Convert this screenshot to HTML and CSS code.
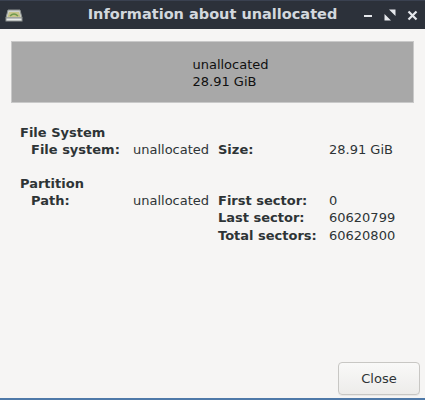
FILE: index.html
```html
<!DOCTYPE html>
<html>
<head>
<meta charset="utf-8">
<link rel="stylesheet" href="styles.css">
</head>
<body>
<div class="window">
  <div class="titlebar">
    <svg class="app-icon" width="18" height="16" viewBox="0 0 18 16">
      <path d="M3 3 L15 3 L17 11 L1 11 Z" fill="#cfd3d0" stroke="#8d9290" stroke-width="1"/>
      <path d="M4 5 L14 5 L15.5 10 L2.5 10 Z" fill="#c7c48a"/>
      <path d="M5 9 Q9 5 13 9" stroke="#6f9a4e" stroke-width="1.5" fill="none"/>
      <rect x="1" y="11" width="16" height="3" fill="#e8eae8" stroke="#8d9290" stroke-width="1"/>
    </svg>
    <div class="title">Information about unallocated</div>
    <div class="controls">
      <svg width="10" height="10" viewBox="0 0 10 10"><rect x="1" y="5" width="8" height="2" fill="#e6e8ec"/></svg>
      <svg width="12" height="12" viewBox="0 0 12 12"><path d="M5 0.5 L11.5 0.5 L11.5 7 Z M0.5 5 L7 11.5 L0.5 11.5 Z" fill="#e6e8ec"/></svg>
      <svg width="11" height="11" viewBox="0 0 11 11"><path d="M1.5 1.5 L9.5 9.5 M9.5 1.5 L1.5 9.5" stroke="#e6e8ec" stroke-width="2.2"/></svg>
    </div>
  </div>
  <div class="content">
    <div class="banner">
      <div class="banner-text">unallocated<br>28.91 GiB</div>
    </div>
    <div class="section">
      <div class="heading">File System</div>
      <div class="grid">
        <div class="label">File system:</div><div class="val">unallocated</div><div class="label">Size:</div><div class="val">28.91 GiB</div>
      </div>
    </div>
    <div class="section">
      <div class="heading">Partition</div>
      <div class="grid">
        <div class="label">Path:</div><div class="val">unallocated</div><div class="label">First sector:</div><div class="val">0</div>
        <div></div><div></div><div class="label">Last sector:</div><div class="val">60620799</div>
        <div></div><div></div><div class="label">Total sectors:</div><div class="val">60620800</div>
      </div>
    </div>
    <div class="spacer"></div>
    <div class="buttons"><button class="btn">Close</button></div>
  </div>
</div>
</body>
</html>
```
FILE: styles.css
```css
html, body { margin: 0; padding: 0; }
body {
  width: 425px; height: 400px; overflow: hidden;
  font-family: "DejaVu Sans", sans-serif;
  font-size: 13px; color: #2e3436;
  background: #f6f5f4;
}
.window {
  width: 425px; height: 400px;
  display: flex; flex-direction: column;
  box-sizing: border-box;
  border-bottom: 2px solid #4f79a8;
}
.titlebar {
  height: 29px; flex: none;
  background: #2c313a;
  display: flex; align-items: center;
  position: relative;
  border-top: 1px solid #3a4150;
  box-sizing: border-box;
}
.app-icon { margin-left: 5px; margin-top: -1px; }
.title {
  position: absolute; left: 0; right: 0; top: 5px;
  text-align: center;
  font-weight: bold; font-size: 14.5px;
  color: #d3d8de;
}
.controls {
  margin-left: auto; margin-right: 7px;
  display: flex; align-items: center; gap: 11px;
}
.content {
  flex: 1;
  display: flex; flex-direction: column;
  padding: 12px 11px 3px 11px;
}
.banner {
  height: 62px; background: #a8a8a8;
  border: 1px solid #c9c9c9;
  box-sizing: border-box;
  display: flex; align-items: center; justify-content: center;
}
.banner-text {
  color: #101010; line-height: 17px; margin-left: 36px; margin-top: 1px;
}
.section { margin-left: 9px; }
.heading { font-weight: bold; margin-top: 21px; line-height: 17px; }
.section + .section .heading { margin-top: 16px; }
.grid {
  display: grid;
  grid-template-columns: 102px 85px 111px auto;
  margin-left: 11px;
  line-height: 17.5px;
}
.label { font-weight: bold; }
.val { color: #2e3436; }
.spacer { flex: 1; }
.buttons { display: flex; justify-content: flex-end; margin-right: -6px; }
.btn {
  width: 82px; height: 33px;
  font-family: "DejaVu Sans", sans-serif; font-size: 13px;
  color: #2e3436;
  border: 1px solid #c8c7c4; border-radius: 4px;
  background: linear-gradient(#f9f9f8, #edecea);
  box-shadow: 0 1px 0 rgba(0,0,0,0.05);
}
```
